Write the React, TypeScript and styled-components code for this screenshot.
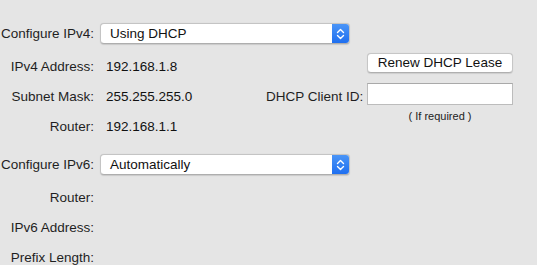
import React from 'react';
import styled, { createGlobalStyle } from 'styled-components';

const GlobalStyle = createGlobalStyle`
  html, body {
    margin: 0;
    padding: 0;
    background: #e5e5e5;
  }
  body {
    font-family: "Liberation Sans", Arial, sans-serif;
    font-size: 13.5px;
    color: #1f1f1f;
  }
`;

const Page = styled.div`
  width: 537px;
  height: 265px;
  overflow: hidden;
  padding-top: 23px;
  box-sizing: border-box;
  background: #e5e5e5;
`;

const SelectRow = styled.div<{ $top?: number }>`
  display: flex;
  align-items: center;
  height: 21px;
  margin-top: ${(p) => p.$top ?? 0}px;
`;

const Label = styled.div`
  grid-column: 1;
  width: 94px;
  text-align: right;
  white-space: nowrap;
  flex-shrink: 0;
`;

const SelectBox = styled.div`
  margin-left: 6px;
  width: 250px;
  height: 21px;
  box-sizing: border-box;
  display: flex;
  align-items: stretch;
  background: #fff;
  border: 1px solid #c4c4c4;
  border-bottom-color: #aeaeae;
  border-radius: 4px;
  box-shadow: 0 0.5px 1px rgba(0, 0, 0, 0.12);
  overflow: hidden;
`;

const SelectText = styled.div`
  flex: 1;
  padding-left: 9px;
  line-height: 19px;
  color: #111;
`;

const Stepper = styled.div`
  width: 17px;
  display: flex;
  align-items: center;
  justify-content: center;
  background: linear-gradient(#4a95f7, #1f6ff0);
`;

const DetailGrid = styled.div<{ $top: number }>`
  display: grid;
  grid-template-columns: 94px 172px 94px 153px;
  grid-auto-rows: 30px;
  margin-top: ${(p) => p.$top}px;
  align-items: center;
`;

const Value = styled.div`
  grid-column: 2;
  padding-left: 12px;
  color: #111;
  white-space: nowrap;
`;

const SideLabel = styled.div<{ $row: number }>`
  grid-column: 3;
  grid-row: ${(p) => p.$row};
  text-align: right;
  white-space: nowrap;
`;

const SideCell = styled.div<{ $row: number }>`
  grid-column: 4;
  grid-row: ${(p) => p.$row};
  align-self: start;
  padding-left: 7px;
  padding-top: 2px;
`;

const PushButton = styled.div`
  width: 146px;
  height: 20px;
  box-sizing: border-box;
  background: #fff;
  border: 1px solid #c6c6c6;
  border-bottom-color: #b0b0b0;
  border-radius: 4px;
  box-shadow: 0 0.5px 1px rgba(0, 0, 0, 0.1);
  text-align: center;
  line-height: 18px;
  color: #111;
`;

const TextField = styled.div`
  width: 146px;
  height: 22px;
  box-sizing: border-box;
  background: #fff;
  border: 1px solid #bcbcbc;
  border-top-color: #a9a9a9;
`;

const Hint = styled.div`
  width: 146px;
  text-align: center;
  font-size: 11px;
  line-height: 11px;
  color: #222;
  margin-top: -2px;
`;

function StepperIcon() {
  return (
    <svg width="9" height="12" viewBox="0 0 9 12">
      <path
        d="M1.5 4.5 L4.5 1.5 L7.5 4.5 M1.5 7.5 L4.5 10.5 L7.5 7.5"
        fill="none"
        stroke="#fff"
        strokeWidth="1.4"
        strokeLinecap="round"
        strokeLinejoin="round"
      />
    </svg>
  );
}

function PopupSelect({ label, value, top }: { label: string; value: string; top?: number }) {
  return (
    <SelectRow $top={top}>
      <Label>{label}</Label>
      <SelectBox>
        <SelectText>{value}</SelectText>
        <Stepper>
          <StepperIcon />
        </Stepper>
      </SelectBox>
    </SelectRow>
  );
}

export default function App() {
  return (
    <Page>
      <GlobalStyle />
      <PopupSelect label="Configure IPv4:" value="Using DHCP" />

      <DetailGrid $top={7}>
        <Label>IPv4 Address:</Label>
        <Value>192.168.1.8</Value>
        <Label>Subnet Mask:</Label>
        <Value>255.255.255.0</Value>
        <Label>Router:</Label>
        <Value>192.168.1.1</Value>

        <SideCell $row={1}>
          <PushButton>Renew DHCP Lease</PushButton>
        </SideCell>
        <SideLabel $row={2}>DHCP Client ID:</SideLabel>
        <SideCell $row={2}>
          <TextField />
        </SideCell>
        <SideCell $row={3}>
          <Hint>( If required )</Hint>
        </SideCell>
      </DetailGrid>

      <PopupSelect label="Configure IPv6:" value="Automatically" top={13} />

      <DetailGrid $top={7}>
        <Label>Router:</Label>
        <Label>IPv6 Address:</Label>
        <Label>Prefix Length:</Label>
      </DetailGrid>
    </Page>
  );
}
